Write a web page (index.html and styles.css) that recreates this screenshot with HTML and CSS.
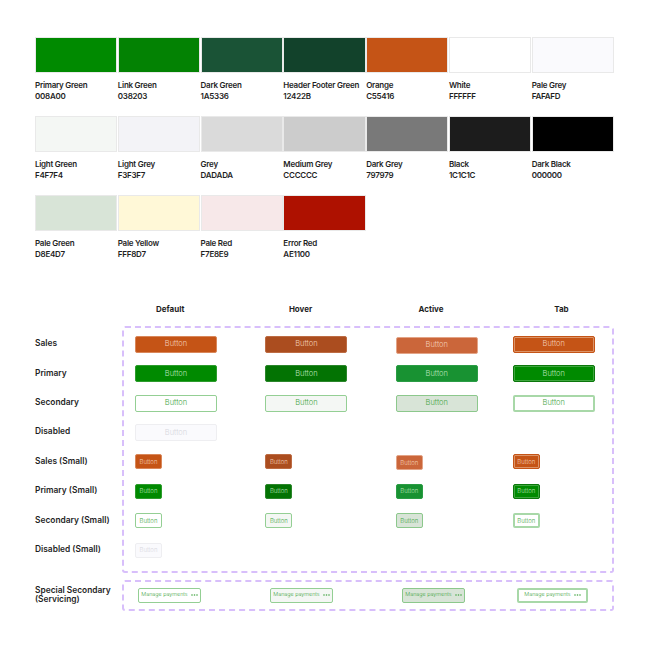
FILE: index.html
```html
<!DOCTYPE html>
<html lang="en">
<head>
<meta charset="utf-8">
<title>Colours and buttons</title>
<link rel="stylesheet" href="styles.css">
</head>
<body>
<main class="page">
  <section class="palette">
    <div class="colour"><div class="swatch s-008a00"></div><p class="name">Primary Green</p><p class="hex">008A00</p></div>
    <div class="colour"><div class="swatch s-038203"></div><p class="name">Link Green</p><p class="hex">038203</p></div>
    <div class="colour"><div class="swatch s-1a5336"></div><p class="name">Dark Green</p><p class="hex">1A5336</p></div>
    <div class="colour"><div class="swatch s-12422b"></div><p class="name">Header Footer Green</p><p class="hex">12422B</p></div>
    <div class="colour"><div class="swatch s-c55416"></div><p class="name">Orange</p><p class="hex">C55416</p></div>
    <div class="colour"><div class="swatch s-ffffff"></div><p class="name">White</p><p class="hex">FFFFFF</p></div>
    <div class="colour"><div class="swatch s-fafafd"></div><p class="name">Pale Grey</p><p class="hex">FAFAFD</p></div>
    <div class="colour"><div class="swatch s-f4f7f4"></div><p class="name">Light Green</p><p class="hex">F4F7F4</p></div>
    <div class="colour"><div class="swatch s-f3f3f7"></div><p class="name">Light Grey</p><p class="hex">F3F3F7</p></div>
    <div class="colour"><div class="swatch s-dadada"></div><p class="name">Grey</p><p class="hex">DADADA</p></div>
    <div class="colour"><div class="swatch s-cccccc"></div><p class="name">Medium Grey</p><p class="hex">CCCCCC</p></div>
    <div class="colour"><div class="swatch s-797979"></div><p class="name">Dark Grey</p><p class="hex">797979</p></div>
    <div class="colour"><div class="swatch s-1c1c1c"></div><p class="name">Black</p><p class="hex">1C1C1C</p></div>
    <div class="colour"><div class="swatch s-000000"></div><p class="name">Dark Black</p><p class="hex">000000</p></div>
    <div class="colour"><div class="swatch s-d8e4d7"></div><p class="name">Pale Green</p><p class="hex">D8E4D7</p></div>
    <div class="colour"><div class="swatch s-fff8d7"></div><p class="name">Pale Yellow</p><p class="hex">FFF8D7</p></div>
    <div class="colour"><div class="swatch s-f7e8e9"></div><p class="name">Pale Red</p><p class="hex">F7E8E9</p></div>
    <div class="colour"><div class="swatch s-ae1100"></div><p class="name">Error Red</p><p class="hex">AE1100</p></div>
  </section>

  <section class="states">
    <div class="heads">
      <span>Default</span><span>Hover</span><span>Active</span><span>Tab</span>
    </div>
    <div class="matrix">
      <div class="labels">
        <span>Sales</span><span>Primary</span><span>Secondary</span><span>Disabled</span>
        <span>Sales (Small)</span><span>Primary (Small)</span><span>Secondary (Small)</span><span>Disabled (Small)</span>
      </div>
      <div class="box buttons">
        <button class="btn sales">Button</button><button class="btn sales hover">Button</button><button class="btn sales active drop">Button</button><button class="btn sales tab">Button</button>
        <button class="btn primary">Button</button><button class="btn primary hover">Button</button><button class="btn primary active">Button</button><button class="btn primary tab">Button</button>
        <button class="btn secondary">Button</button><button class="btn secondary hover">Button</button><button class="btn secondary active">Button</button><button class="btn secondary tab">Button</button>
        <button class="btn disabled">Button</button><i></i><i></i><i></i>
        <button class="btn small sales">Button</button><button class="btn small sales hover">Button</button><button class="btn small sales active drop">Button</button><button class="btn small sales tab">Button</button>
        <button class="btn small primary">Button</button><button class="btn small primary hover">Button</button><button class="btn small primary active">Button</button><button class="btn small primary tab">Button</button>
        <button class="btn small secondary">Button</button><button class="btn small secondary hover">Button</button><button class="btn small secondary active">Button</button><button class="btn small secondary tab">Button</button>
        <button class="btn small disabled">Button</button><i></i><i></i><i></i>
      </div>
    </div>
    <div class="matrix special-row">
      <div class="labels special-label"><span>Special Secondary (Servicing)</span></div>
      <div class="box special">
        <button class="btn manage secondary"><span>Manage payments</span><svg class="dots" viewBox="0 0 7 2" aria-hidden="true"><circle cx="1" cy="1" r=".8"/><circle cx="3.5" cy="1" r=".8"/><circle cx="6" cy="1" r=".8"/></svg></button>
        <button class="btn manage secondary hover"><span>Manage payments</span><svg class="dots" viewBox="0 0 7 2" aria-hidden="true"><circle cx="1" cy="1" r=".8"/><circle cx="3.5" cy="1" r=".8"/><circle cx="6" cy="1" r=".8"/></svg></button>
        <button class="btn manage secondary active"><span>Manage payments</span><svg class="dots" viewBox="0 0 7 2" aria-hidden="true"><circle cx="1" cy="1" r=".8"/><circle cx="3.5" cy="1" r=".8"/><circle cx="6" cy="1" r=".8"/></svg></button>
        <button class="btn manage secondary tab wide"><span>Manage payments</span><svg class="dots" viewBox="0 0 7 2" aria-hidden="true"><circle cx="1" cy="1" r=".8"/><circle cx="3.5" cy="1" r=".8"/><circle cx="6" cy="1" r=".8"/></svg></button>
      </div>
    </div>
  </section>
</main>
</body>
</html>
```
FILE: styles.css
```css
* { box-sizing: border-box; }
html, body { margin: 0; background: #fff; }
body { font-family: "Inter", "Liberation Sans", sans-serif; color: #1f1f1f; }
.page { width: 650px; height: 650px; padding: 37px 36px 0 35px; overflow: hidden; }

.palette { display: grid; grid-template-columns: repeat(7, 1fr); grid-auto-rows: 79px; column-gap: 0.5px; }
.swatch { height: 36px; border: 1px solid #e9e9e9; }
.name, .hex { margin: 0; font-size: 8px; line-height: 11px; font-weight: 600; letter-spacing: -0.25px; white-space: nowrap; }
.name { margin-top: 7px; }
.s-008a00 { background: #008a00; }
.s-038203 { background: #038203; }
.s-1a5336 { background: #1a5336; }
.s-12422b { background: #12422b; }
.s-c55416 { background: #c55416; }
.s-ffffff { background: #fff; }
.s-fafafd { background: #fafafd; }
.s-f4f7f4 { background: #f4f7f4; }
.s-f3f3f7 { background: #f3f3f7; }
.s-dadada { background: #dadada; }
.s-cccccc { background: #ccc; }
.s-797979 { background: #797979; }
.s-1c1c1c { background: #1c1c1c; }
.s-000000 { background: #000; }
.s-d8e4d7 { background: #d8e4d7; }
.s-fff8d7 { background: #fff8d7; }
.s-f7e8e9 { background: #f7e8e9; }
.s-ae1100 { background: #ae1100; }

.states { margin-top: 30px; }
.heads { display: grid; grid-template-columns: repeat(4, 130.4px); margin-left: 70px; height: 21.5px; font-size: 8px; line-height: 11px; font-weight: 700; text-align: center; }

.matrix { display: flex; }
.labels { width: 86.5px; flex: none; display: grid; grid-auto-rows: 29.43px; padding-top: 3px; font-size: 8.4px; font-weight: 600; }
.labels span { display: flex; align-items: center; white-space: nowrap; }
.box { flex: 1; border: 2px dashed #d8bffb; border-radius: 3px; }
.buttons { height: 247px; padding: 2px 0 0 11.5px; display: grid; grid-template-columns: 130.4px 130.4px 117px 1fr; grid-auto-rows: 29.43px; align-items: center; justify-items: start; }

.btn { display: block; width: 82px; height: 17px; padding: 0; border: 1px solid transparent; border-radius: 2px; font: 300 7.5px/1 "Inter", "Liberation Sans", sans-serif; text-align: center; }
.btn.small { width: 27px; height: 15px; font-size: 6px; }
.drop { margin-top: 2px; }

.sales { background: #c55416; border-color: #d9875a; color: #f3cdb6; }
.sales.hover { background: #ab4d1f; border-color: #bd6c44; }
.sales.active { background: #cb663a; border-color: #e3a487; }
.sales.tab { background: #c55416; border-color: #c55416; box-shadow: inset 0 0 0 1px #dc9468; }

.primary { background: #008a00; border-color: #2d9c2d; color: #b9e2b9; }
.primary.hover { background: #037303; border-color: #2b862b; }
.primary.active { background: #189232; border-color: #2b9d45; }
.primary.tab { background: #008a00; border-color: #0b770b; box-shadow: inset 0 0 0 1px #3fa63f; }

.secondary { background: #fff; border-color: #94cf94; color: #46a646; }
.secondary.hover { background: #f4f7f4; }
.secondary.active { background: #d8e4d7; border-color: #8cc88c; }
.secondary.tab { background: #fff; border: 2px solid #a8d8a8; }

.disabled { background: #fafafd; border-color: #eeeef1; color: #d8d8dd; }

.special-row { margin-top: 7px; }
.special-label { padding-top: 0; grid-auto-rows: 31px; line-height: 9.5px; }
.special-label span { white-space: normal; width: 84px; }
.special { height: 31px; display: grid; grid-template-columns: 132px 132px 115px 1fr; align-items: center; justify-items: start; padding-left: 14.5px; }
.manage { width: 63px; height: 15px; display: flex; align-items: center; justify-content: center; gap: 3px; font-size: 5.4px; white-space: nowrap; }
.manage.wide { width: 71px; }
.dots { width: 7px; height: 2px; fill: currentColor; }
```
